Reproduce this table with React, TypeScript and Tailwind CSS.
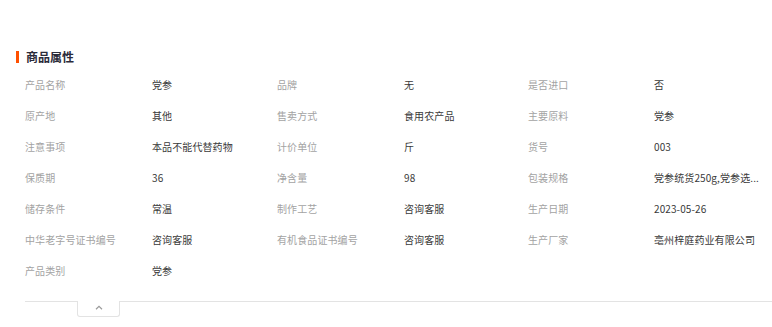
import React from 'react';

type Attr = { label: string; value: string };

const attrs: Attr[] = [
  { label: '产品名称', value: '党参' },
  { label: '品牌', value: '无' },
  { label: '是否进口', value: '否' },
  { label: '原产地', value: '其他' },
  { label: '售卖方式', value: '食用农产品' },
  { label: '主要原料', value: '党参' },
  { label: '注意事项', value: '本品不能代替药物' },
  { label: '计价单位', value: '斤' },
  { label: '货号', value: '003' },
  { label: '保质期', value: '36' },
  { label: '净含量', value: '98' },
  { label: '包装规格', value: '党参统货250g,党参选...' },
  { label: '储存条件', value: '常温' },
  { label: '制作工艺', value: '咨询客服' },
  { label: '生产日期', value: '2023-05-26' },
  { label: '中华老字号证书编号', value: '咨询客服' },
  { label: '有机食品证书编号', value: '咨询客服' },
  { label: '生产厂家', value: '亳州梓庭药业有限公司' },
  { label: '产品类别', value: '党参' },
];

const App: React.FC = () => {
  return (
    <div
      className="w-[772px] h-[327px] bg-white pt-[50px] overflow-hidden"
      style={{ fontFamily: '"Noto Sans CJK SC", "Liberation Sans", sans-serif' }}
    >
      {/* Section title */}
      <div className="flex items-center h-[14px] pl-[16px]">
        <span className="w-[3px] h-[12px] bg-[#ff5000]" />
        <h2 className="ml-[7px] text-[12px] leading-[14px] font-bold text-[#2b2b3a]">商品属性</h2>
      </div>

      {/* Attribute grid */}
      <div className="mt-[5px] ml-[25px] mr-[6px] grid grid-cols-[127px_125px_127px_124px_126px_minmax(0,1fr)]">
        {attrs.map((a) => (
          <React.Fragment key={a.label}>
            <div className="h-[31px] flex items-center text-[10px] text-[#a3a3a3] tracking-[0.1px] whitespace-nowrap">
              {a.label}
            </div>
            <div className="h-[31px] flex items-center min-w-0 text-[10px] text-[#3a3a3a] tracking-[0.1px] whitespace-nowrap">
              {a.value}
            </div>
          </React.Fragment>
        ))}
      </div>

      {/* Collapse bar */}
      <div className="mt-[15px] ml-[25px] border-t border-[#e3e3e3]">
        <button className="-mt-px ml-[52px] w-[43px] h-[16px] flex items-center justify-center bg-white border border-t-0 border-[#e3e3e3] rounded-b-[3px]">
          <svg width="8" height="5" viewBox="0 0 8 5" className="-mt-[3px]">
            <polyline points="1,4.2 4,1.3 7,4.2" fill="none" stroke="#9a9a9a" strokeWidth="1.2" />
          </svg>
        </button>
      </div>
    </div>
  );
};

export default App;
